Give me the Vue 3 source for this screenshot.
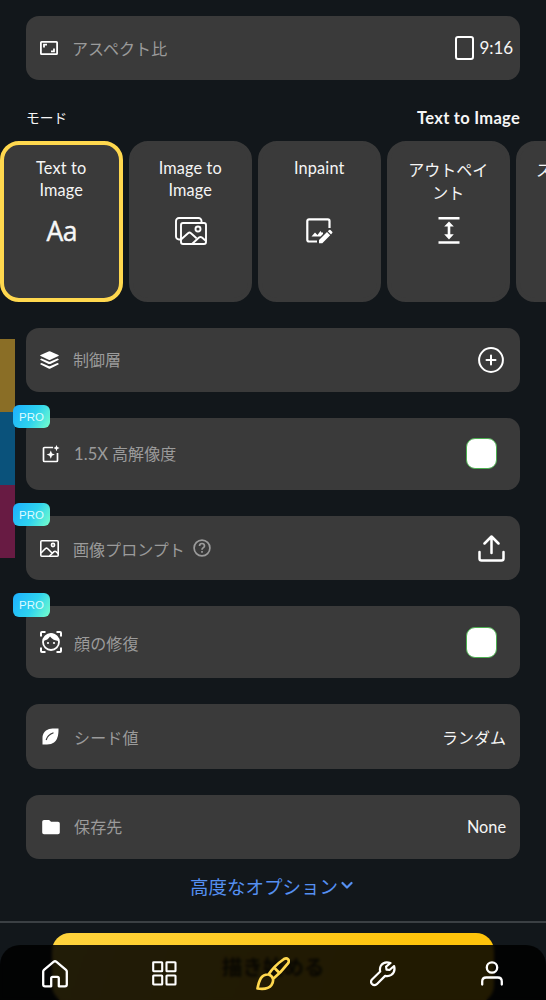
<script setup>
const modes = [
  { id: 'text', lines: ['Text to', 'Image'], active: true },
  { id: 'image', lines: ['Image to', 'Image'] },
  { id: 'inpaint', lines: ['Inpaint'] },
  { id: 'outpaint', lines: ['アウトペイ', 'ント'], cjk: true },
  { id: 'next', lines: ['ス'], cjk: true, partial: true },
]
</script>

<template>
  <div class="screen">
    <div class="swatches"><i class="gold"></i><i class="blue"></i><i class="plum"></i></div>

    <main class="content">
      <section class="row">
        <span class="slot">
          <svg width="18" height="14" viewBox="0 0 18 14" fill="none" stroke="#fff" stroke-width="1.8"><rect x=".9" y=".9" width="16.2" height="12.2" rx=".7" /><path d="M4 6.5V3.7h3M14 7.5v2.8h-3" /></svg>
        </span>
        <span class="label first-label">アスペクト比</span>
        <span class="ratio"><i class="frame"></i><span class="latin">9:16</span></span>
      </section>

      <header class="mode-head"><span class="mode-title">モード</span><b class="mode-value">Text to Image</b></header>

      <div class="modes">
        <article v-for="m in modes" :key="m.id" class="mode" :class="{ active: m.active, cjk: m.cjk, partial: m.partial }">
          <div class="mode-name"><div v-for="l in m.lines" :key="l">{{ l }}</div></div>
          <div class="mode-icon">
            <span v-if="m.id === 'text'" class="aa">Aa</span>
            <svg v-else-if="m.id === 'image'" width="32" height="28" viewBox="0 0 32 28" fill="none" stroke="#fff" stroke-width="1.9" stroke-linejoin="round">
              <path d="M6 22.500H4A3 3 0 0 1 1 19.500V4A3 3 0 0 1 4 1h19.500a3 3 0 0 1 3 3v2" />
              <rect x="6" y="6" width="25" height="21" rx="2" /><circle cx="23" cy="12" r="2.500" />
              <path d="m6 22.500 7-6.300q1.500-1.200 3 0l5.500 5M17 27l7-6.500q1.500-1.200 3 0L31 24" />
            </svg>
            <svg v-else-if="m.id === 'inpaint'" width="27" height="26" viewBox="0 0 27 26">
              <path d="M23.500 10V3a1.700 1.700 0 0 0-1.700-1.700H3A1.700 1.700 0 0 0 1.300 3v18.800A1.700 1.700 0 0 0 3 23.500h8" fill="none" stroke="#fff" stroke-width="2.200" />
              <path d="m5.500 18.500 3.500-4 2.500 2.500 3-4 1.500 2 1-1v2l-2.500 2.500z" fill="#fff" />
              <path d="M13 25.200v-3.200L21 14l3.200 3.200-7.900 8zM21.800 13.200l1.300-1.200q.7-.6 1.400 0l1.700 1.700q.7.700 0 1.400l-1.200 1.300z" fill="#fff" />
            </svg>
            <svg v-else-if="m.id === 'outpaint'" width="22" height="27" viewBox="0 0 22 27" fill="#fff"><path d="M.5 0h21v2.600H.5zM.5 24.200h21v2.600H.5zM11 4.400l4.800 5.200H12.300v7.600h3.500L11 22.400l-4.800-5.200h3.500V9.600H6.200z" /></svg>
          </div>
        </article>
      </div>

      <section class="row first">
        <span class="slot"><svg width="19" height="18" viewBox="0 0 18 18" preserveAspectRatio="none" fill="#fff"><path d="M8.100.4q.9-.4 1.800 0l7.500 3.600q.9.500 0 1L9.900 8.700q-.9.400-1.800 0L.6 5q-.9-.5 0-1z" /><path d="m1.500 7.400 6.600 3.200q.9.400 1.800 0l6.600-3.200q2 .7.900 1.600l-7.500 3.900q-.9.400-1.800 0L.6 9q-1.100-.9.900-1.600z" /><path d="m1.500 11.900 6.600 3.200q.9.400 1.800 0l6.600-3.200q2 .7.900 1.600l-7.500 4q-.9.400-1.800 0L.6 13.500q-1.100-.9.900-1.600z" /></svg></span>
        <span class="label nudge up">制御層</span>
        <svg class="action plus" width="26" height="26" viewBox="0 0 26 26" fill="none" stroke="#fff" stroke-width="2" stroke-linecap="round"><circle cx="13" cy="13" r="11.900" /><path d="M13 8.500v9M8.500 13h9" /></svg>
      </section>

      <section class="row tall">
        <span class="pro">PRO</span>
        <span class="slot wide"><svg width="18" height="18" viewBox="0 0 18 18"><path d="M11 2.500H2.500a1 1 0 0 0-1 1v12a1 1 0 0 0 1 1H14.500a1 1 0 0 0 1-1V8" fill="none" stroke="#fff" stroke-width="1.700" /><path d="m8.800 5.500 1.200 2.900 2.900 1.200-2.900 1.200-1.200 2.900-1.300-2.900-2.900-1.200 2.900-1.200zM14.500 0l.9 2.100 2.200 1-2.200.9-.9 2.200-.9-2.200-2.200-.9 2.200-1z" fill="#fff" /></svg></span>
        <span class="label mixed up"><span class="latin">1.5X</span> 高解像度</span>
        <i class="check"></i>
      </section>

      <section class="row">
        <span class="pro">PRO</span>
        <span class="slot"><svg width="19" height="17" viewBox="0 0 19 17" fill="none" stroke="#fff" stroke-width="1.600" stroke-linejoin="round"><rect x=".8" y=".8" width="17.400" height="15.400" rx="1" /><circle cx="13" cy="5" r="1.600" /><path d="m1 13 4.500-4.500q1-.8 2 0l5 5M9.500 16l4.500-4.300q1-.8 2 0l2.200 2" /></svg></span>
        <span class="label nudge">画像プロンプト</span>
        <svg class="help" width="18" height="18" viewBox="0 0 18 18" fill="none" stroke="#9b9b9b" stroke-width="1.700"><circle cx="9" cy="9" r="7.900" /><path d="M6.500 7q.1-2.500 2.500-2.500T11.500 7c0 1.600-2.500 1.700-2.500 3.700" /><path d="M9 12v1.800" /></svg>
        <svg class="action upload" width="27" height="27" viewBox="0 0 27 27" fill="none" stroke="#fff" stroke-width="2.500" stroke-linecap="round" stroke-linejoin="round"><path d="M13.500 18V1.700M6.500 8.500l7-7 7 7M1.500 17v6.500q0 2 2 2h20q2 0 2-2V17" /></svg>
      </section>

      <section class="row tall">
        <span class="pro">PRO</span>
        <span class="slot wide"><svg width="22" height="22" viewBox="0 0 22 22"><path d="M1 5.500V2q0-1 1-1h3.500M16.500 1H20q1 0 1 1v3.500M21 16.500V20q0 1-1 1h-3.500M5.500 21H2q-1 0-1-1v-3.500" fill="none" stroke="#fff" stroke-width="2" /><circle cx="11" cy="11" r="8" fill="none" stroke="#fff" stroke-width="1.800" /><path d="M3 10q5-1 7-4.500 3 4 8.800 4.500C18 4.500 15 2.500 11 2.500S3.500 5.500 3 10z" fill="#fff" /><circle cx="8" cy="12" r="1.100" fill="#fff" /><circle cx="14" cy="12" r="1.100" fill="#fff" /></svg></span>
        <span class="label mixed">顔の修復</span>
        <i class="check"></i>
      </section>

      <section class="row">
        <span class="slot wide"><svg width="17" height="17" viewBox="0 0 17 17"><path d="M.5 16.500V10Q.5 5 4 2.500T12 .5q3-.1 4.500 0 .1 2.500-.2 5-.5 6-4.300 9-2.500 2-7 2z" fill="#fff" /><path d="M4.200 12Q5.500 7 11.500 4.800" fill="none" stroke="#3a3a3a" stroke-width="1.200" /></svg></span>
        <span class="label mixed">シード値</span>
        <span class="value random">ランダム</span>
      </section>

      <section class="row">
        <span class="slot wide"><svg width="18" height="16" viewBox="0 0 18 16" fill="#fff"><path d="M2 1h4.800q.6 0 1 .5L9 2.700h7q1.800 0 1.800 1.800v9q0 1.700-1.800 1.700H2Q.2 15.200.2 13.500V2.800Q.2 1 2 1z" /></svg></span>
        <span class="label mixed up">保存先</span>
        <span class="value latin none">None</span>
      </section>

      <div class="more"><span>高度なオプション</span><svg width="12" height="9" viewBox="0 0 12 9" fill="none" stroke="#5590f2" stroke-width="2.200" stroke-linecap="round" stroke-linejoin="round"><path d="m1.500 2 4.500 4.500L10.500 2" /></svg></div>
    </main>

    <footer class="bottom">
      <button class="cta">描き始める</button>
      <nav class="nav">
        <span><svg width="26" height="28" viewBox="0 0 26 28" fill="none" stroke="#fff" stroke-width="2.300" stroke-linejoin="round"><path d="M1.200 11.500q0-1 .8-1.700L11.500 1.800q1.500-1.200 3 0L24 9.800q.8.700.8 1.700v13q0 1.800-1.800 1.800h-6.200v-8q0-1.500-1.500-1.500h-4.600q-1.500 0-1.500 1.500v8H3q-1.800 0-1.800-1.800z" /></svg></span>
        <span><svg width="25" height="25" viewBox="0 0 25 25" fill="none" stroke="#fff" stroke-width="2.100"><rect x="1.200" y="1.200" width="9" height="9" rx=".5" /><rect x="14.500" y="1.200" width="9" height="9" rx=".5" /><rect x="1.200" y="14.500" width="9" height="9" rx=".5" /><rect x="14.500" y="14.500" width="9" height="9" rx=".5" /></svg></span>
        <span><svg width="34" height="34" viewBox="0 0 34 34" fill="none" stroke="#ffd84e" stroke-width="2.700" stroke-linejoin="round"><path d="M12.500 17.500Q18 9 28 2q2.500-1.300 4 .2t.2 4Q25 15.500 17 22M12.500 17.500q3.500 1 4.500 4.500M19 11.500l4 4M12.500 17.500q-5-.2-7.500 3.500-2 3-3.500 10.500Q12 33 15.500 28q2-3 1.500-6" /></svg></span>
        <span><svg width="26" height="26" viewBox="0 0 26 26" fill="none" stroke="#fff" stroke-width="2.200" stroke-linejoin="round"><path d="M20.500 2Q14 0 11 4.500q-1.600 2.700-.8 6L2 18.500q-2 2.200 0 4.500 2.300 2.300 4.800.2l8.300-8.300q3.500.8 6.200-1 4.400-3.200 2.800-8.900L19.500 9l-3-.4-.4-3z" /></svg></span>
        <span><svg width="22" height="25" viewBox="0 0 22 25" fill="none" stroke="#fff" stroke-width="2.300" stroke-linecap="round"><circle cx="11" cy="6.500" r="5.200" /><path d="M1.200 23.500v-3q0-4 4-4h11.600q4 0 4 4v3" /></svg></span>
      </nav>
    </footer>
  </div>
</template>

<style>
html, body { margin: 0; background: #12171b; overflow: hidden; }
</style>

<style scoped>
* { box-sizing: border-box; }
.screen { position: relative; width: 546px; height: 1000px; overflow: hidden; background: #12171b; color: #f5f5f5; font-family: "Noto Sans CJK JP", sans-serif; }
.latin, .mode, .mode-value { font-family: Lato, "Noto Sans CJK JP", sans-serif; }
.swatches { position: absolute; left: 0; top: 339px; width: 15.400px; }
.swatches i { display: block; height: 73px; }
.gold { background: #8a6e26; }
.blue { background: #0a527b; }
.plum { background: #681b43; }
.content { display: flex; flex-direction: column; padding: 15.500px 26px 0; }
.row { position: relative; display: flex; align-items: center; height: 64.500px; flex: none; margin-bottom: 25.800px; border-radius: 13px; background: #3a3a3a; }
.row:first-child { margin-bottom: 0; }
.row.tall { height: 72.300px; }
.slot { display: flex; justify-content: center; width: 46px; }
.slot.wide { width: 49px; }
.label { color: #9b9b9b; font-size: 16px; line-height: 24px; padding-top: 1px; letter-spacing: .05px; }
.label.first-label { padding-top: 1px; }
.label.nudge { margin-left: 1px; }
.label.mixed { margin-left: -1px; letter-spacing: .15px; padding-top: 1.500px; }
.label.up { padding-top: 0; margin-top: -1px; }
.label .latin { font-size: 16.500px; letter-spacing: .1px; }
.ratio { display: flex; align-items: center; gap: 6px; margin-left: auto; padding-right: 7px; font-size: 17px; letter-spacing: -.1px; }
.frame { width: 19px; height: 24px; border: 2.600px solid #fff; border-radius: 3px; }
.mode-head { display: flex; justify-content: space-between; align-items: center; height: 60.500px; padding-top: 15px; }
.mode-title { font-size: 13.700px; margin-top: -1px; }
.mode-value { font-size: 16.500px; letter-spacing: .28px; }
.modes { display: flex; gap: 6.500px; margin: 0 -26px 26px; height: 161px; overflow: hidden; }
.mode { flex: 0 0 122.500px; height: 161px; border-radius: 19px; background: #3a3a3a; border: 4px solid #3a3a3a; text-align: center; display: flex; flex-direction: column; padding-top: 12.500px; }
.mode.active { border-color: #ffd84e; }
.mode.partial { text-align: left; padding-left: 16px; }
.mode-name { height: 44px; font-size: 16.300px; line-height: 22px; letter-spacing: .15px; }
.mode.cjk .mode-name { font-size: 16px; line-height: 23px; padding-top: 1px; letter-spacing: 0; }
.mode-icon { display: flex; margin-top: 10.500px; align-items: center; justify-content: center; height: 38px; padding-left: 1px; }
.aa { font: 400 26.500px/30px "Open Sans", sans-serif; letter-spacing: -.5px; -webkit-text-stroke: .4px #fff; }
.action { position: absolute; right: 16px; }
.upload { right: 15px; }
.help { margin-left: 8.500px; }
.check { width: 31px; height: 31px; margin-left: auto; margin-right: 23px; border: 1px solid #4caf50; border-radius: 9px; background: #fff; }
.pro { position: absolute; left: -13px; top: -13px; width: 37px; height: 23.500px; border-radius: 6px; background: linear-gradient(120deg, #1cafff, #2ed3ee 55%, #78ffca); color: #dcfcff; font: 11.500px/24px "Liberation Sans", sans-serif; text-align: center; }
.value { margin-left: auto; margin-right: 14px; font-size: 16.500px; }
.random { font-size: 16px; padding-top: 1px; }
.none { font-size: 16.300px; }
.more { display: flex; justify-content: center; align-items: center; gap: 3px; height: 28px; margin: -13px 3px 0 0; color: #5590f2; font-size: 18.500px; }
.bottom { position: absolute; inset: 921px 0 0; border-top: 2px solid #3b4044; }
.cta { display: block; width: 442px; height: 70px; margin: 10px auto 0; padding: 0 0 4px; border: 0; border-radius: 18px; background: linear-gradient(110deg, #ffd43e, #ffc40b 80%); color: #3a310d; font: 700 20.500px/66px "Noto Sans CJK JP", sans-serif; text-align: center; }
.nav { position: absolute; left: 0; right: 0; top: 22px; height: 55px; display: grid; grid-template-columns: repeat(5, 1fr); border-radius: 20px 20px 0 0; background: rgba(0, 0, 0, .87); backdrop-filter: blur(1.500px); }
.nav span { display: flex; justify-content: center; align-items: center; padding: 2px 0 0 1px; }
</style>
